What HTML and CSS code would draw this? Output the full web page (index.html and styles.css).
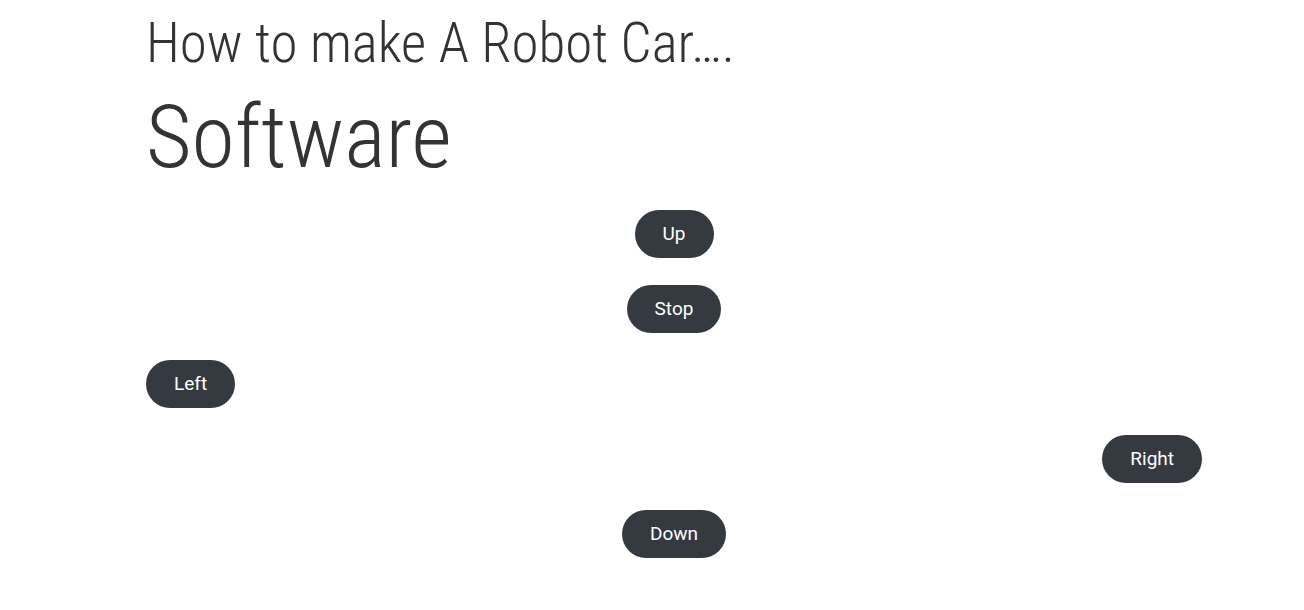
FILE: index.html
```html
<!DOCTYPE html>
<html>
<head>
<meta charset="utf-8">
<link rel="stylesheet" href="styles.css">
</head>
<body>
<main class="container">
  <h2 class="title">How to make A Robot Car….</h2>
  <h1 class="section">Software</h1>
  <div class="controls">
    <div class="row center"><button class="btn">Up</button></div>
    <div class="row center"><button class="btn">Stop</button></div>
    <div class="row start"><button class="btn">Left</button></div>
    <div class="row end"><button class="btn">Right</button></div>
    <div class="row center"><button class="btn">Down</button></div>
  </div>
</main>
</body>
</html>
```
FILE: styles.css
```css
html, body {
  margin: 0;
  padding: 0;
  background: #ffffff;
}
body {
  font-family: Roboto, "Liberation Sans", sans-serif;
  color: #333333;
}
.container {
  width: 1056px;
  margin-left: 146px;
}
.title {
  margin: 0;
  padding-top: 9px;
  font-size: 55px;
  font-weight: 300;
  font-stretch: 75%;
  line-height: 68px;
  color: #333333;
}
.section {
  margin: 0;
  font-size: 88px;
  font-weight: 300;
  font-stretch: 75%;
  line-height: 120px;
  color: #333333;
}
.controls {
  display: flex;
  flex-direction: column;
  gap: 27px;
  margin-top: 13px;
}
.row {
  display: flex;
}
.center { justify-content: center; }
.start { justify-content: flex-start; }
.end { justify-content: flex-end; }
.btn {
  font-family: Roboto, "Liberation Sans", sans-serif;
  font-size: 19px;
  font-weight: 400;
  color: #ffffff;
  background: #343a40;
  border: none;
  border-radius: 24px;
  height: 48px;
  padding: 0 28px;
  line-height: 48px;
}
```
